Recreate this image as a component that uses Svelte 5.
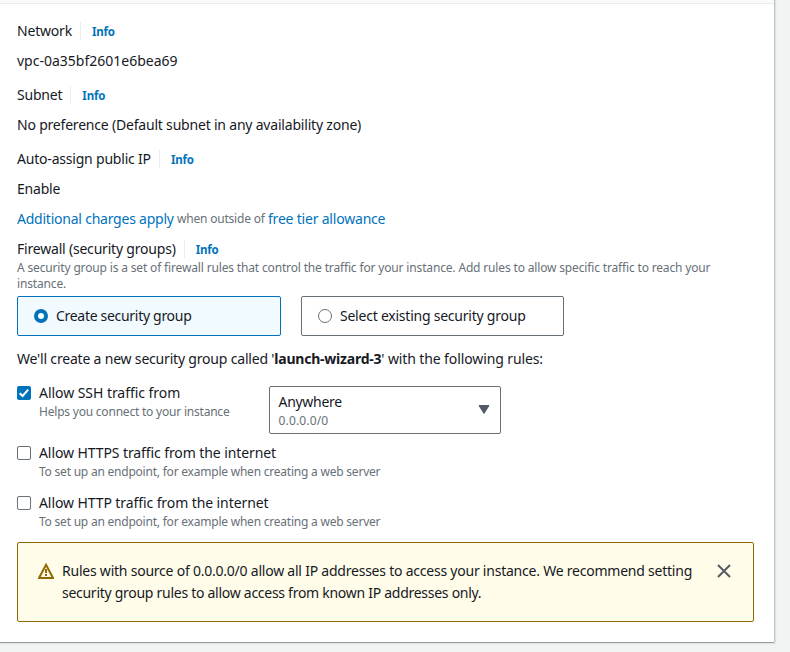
<script>
  let group = $state('create');
  const fields = [
    { label: 'Network', value: 'vpc-0a35bf2601e6bea69', name: 'network' },
    { label: 'Subnet', value: 'No preference (Default subnet in any availability zone)', name: 'subnet' },
    { label: 'Auto-assign public IP', value: 'Enable', name: 'ip' }
  ];
  const options = [
    { id: 'create', label: 'Create security group' },
    { id: 'select', label: 'Select existing security group' }
  ];
  const rules = [
    { id: 'https', label: 'Allow HTTPS traffic from the internet' },
    { id: 'http', label: 'Allow HTTP traffic from the internet' }
  ];
</script>

{#snippet heading(text)}
  <div class="heading"><span class="label">{text}</span><span class="info">Info</span></div>
{/snippet}

<div class="page">
  <main class="panel">
    {#each fields as f}
      <section class="field">
        {@render heading(f.label)}
        <div class="value" class:vpc={f.name === 'network'}>{f.value}</div>
      </section>
    {/each}
    <div class="charges"><span class="link c1">Additional charges apply</span><span class="small c2">when outside of</span><span class="link">free tier allowance</span></div>
    <section class="firewall">
      {@render heading('Firewall (security groups)')}
      <div class="small desc">A security group is a set of firewall rules that control the traffic for your instance. Add rules to allow specific traffic to reach your<br />instance.</div>
      <div class="tiles">
        {#each options as o}
          <button class="tile" class:selected={group === o.id} onclick={() => (group = o.id)}>
            <span class="radio"></span><span>{o.label}</span>
          </button>
        {/each}
      </div>
    </section>
    <p class="summary">We'll create a new security group called '<b>launch-wizard-3</b><span class="tail">' with the following rules:</span></p>
    <div class="ssh">
      <div class="rule first">
        <span class="check on"><svg viewBox="0 0 14 14"><path d="M2.7 7.2 5.6 10 11.2 3.7" fill="none" stroke="#fff" stroke-width="2" /></svg></span>
        <div><div class="r-ssh">Allow SSH traffic from</div><div class="small r-help">Helps you connect to your instance</div></div>
      </div>
      <div class="select">
        <div><div class="anywhere">Anywhere</div><div class="small cidr">0.0.0.0/0</div></div>
        <svg class="caret" viewBox="0 0 12 9"><path d="M1 .5h10L6 8.5z" fill="#545b64" stroke="#545b64" stroke-linejoin="round" /></svg>
      </div>
    </div>
    {#each rules as r}
      <div class="rule">
        <span class="check"></span>
        <div><div class="r-title">{r.label}</div><div class="small r-end">To set up an endpoint, for example when creating a web server</div></div>
      </div>
    {/each}
    <div class="alert">
      <svg class="warn" viewBox="0 0 16 16"><path d="M8 1.8 15 15H1z" fill="none" stroke="#906806" stroke-width="2" /><path d="M8 6v4M8 11v2" stroke="#906806" stroke-width="2" /></svg>
      <div class="message"><span class="m1">Rules with source of 0.0.0.0/0 allow all IP addresses to access your instance. We recommend setting</span><br /><span class="m2">security group rules to allow access from known IP addresses only.</span></div>
      <svg class="close" viewBox="0 0 14 14"><path d="M1 1l12 12M13 1 1 13" stroke="#545b64" stroke-width="2" /></svg>
    </div>
  </main>
</div>

<style>
  :global(body) { margin: 0; background: #f2f3f3; }
  .page { width: 790px; height: 652px; overflow: hidden; background: #f2f3f3; }
  .panel {
    box-sizing: border-box; width: 774px; height: 642px; padding: 17px 20px 0 17px;
    border-top: 3px solid #fafafa; background: linear-gradient(#eaeded 1px, #fff 1px); background-clip: padding-box;
    font: 14px/22px "Noto Sans", sans-serif; letter-spacing: -0.2px; color: #16191f;
    box-shadow: 0 1px 0 #939fa1, 1px 0 0 #bcc3c5, 1px 1px 1px 1px #dfe3e4;
    white-space: nowrap;
  }
  .field { margin-bottom: 12px; }
  .field:nth-of-type(3) { margin-bottom: 8px; }
  .heading { display: flex; align-items: center; height: 22px; }
  .info { margin-left: 8px; padding-left: 11px; border-left: 1px solid #eaeded; height: 18px; line-height: 19px; font-size: 11.5px; font-weight: 700; letter-spacing: -0.2px; color: #0073bb; }
  .value { margin-top: 8px; height: 22px; }
  .vpc { letter-spacing: 0; }
  .link { color: #0073bb; }
  .c1 { letter-spacing: -0.23px; }
  .small { font-size: 12px; line-height: 16px; color: #687078; }
  .charges { height: 22px; display: flex; align-items: center; gap: 3.3px; margin-bottom: 8px; }
  .desc { height: 32px; letter-spacing: -0.157px; }
  .tiles { display: flex; gap: 20px; margin-top: 4px; }
  .tile { box-sizing: border-box; width: 264px; height: 40px; padding: 0 16px; border: 1px solid #687078; border-radius: 2px; display: flex; align-items: center; gap: 8px; background: #fff; font: inherit; letter-spacing: -0.3px; color: inherit; }
  .tile + .tile { width: 263px; letter-spacing: -0.23px; }
  .tile.selected { background: #f1faff; border-color: #0073bb; }
  .radio { box-sizing: border-box; width: 14px; height: 14px; border: 1px solid #687078; border-radius: 50%; background: #fff; }
  .selected .radio { border: 4px solid #0073bb; }
  .summary { margin: 12px 0 0; height: 22px; letter-spacing: -0.19px; }
  .summary b { letter-spacing: -0.22px; }
  .tail { letter-spacing: -0.11px; }
  .ssh { display: flex; height: 48px; margin-top: 16px; margin-bottom: 8px; }
  .rule { display: flex; gap: 8px; height: 38px; margin-bottom: 12px; }
  .rule.first { width: 252px; margin-top: -4px; }
  .r-ssh { letter-spacing: -0.05px; }
  .r-help { letter-spacing: -0.21px; }
  .r-title { letter-spacing: -0.09px; }
  .r-end { letter-spacing: -0.22px; }
  .check { box-sizing: border-box; width: 14px; height: 14px; margin-top: 4px; border: 1px solid #687078; border-radius: 2px; background: #fff; }
  .check.on { border: 0; background: #0073bb; }
  .check svg { display: block; }
  .select { box-sizing: border-box; width: 232px; height: 48px; padding: 4px 10px 0 8.5px; border: 1px solid #687078; border-radius: 2px; display: flex; justify-content: space-between; }
  .anywhere { letter-spacing: -0.3px; }
  .cidr { letter-spacing: 0.15px; }
  .caret { width: 12px; height: 9px; margin-top: 14px; }
  .alert { box-sizing: border-box; width: 737px; height: 80px; padding: 17px 20px; border: 1px solid #906806; border-radius: 2px; background: #fffce9; display: flex; }
  .warn { width: 16px; height: 16px; margin: 3px 8px 0 0; }
  .message { flex: 1; }
  .m1 { letter-spacing: -0.227px; }
  .m2 { letter-spacing: -0.275px; }
  .close { width: 14px; height: 14px; margin: 4px 2px 0 0; }
</style>
